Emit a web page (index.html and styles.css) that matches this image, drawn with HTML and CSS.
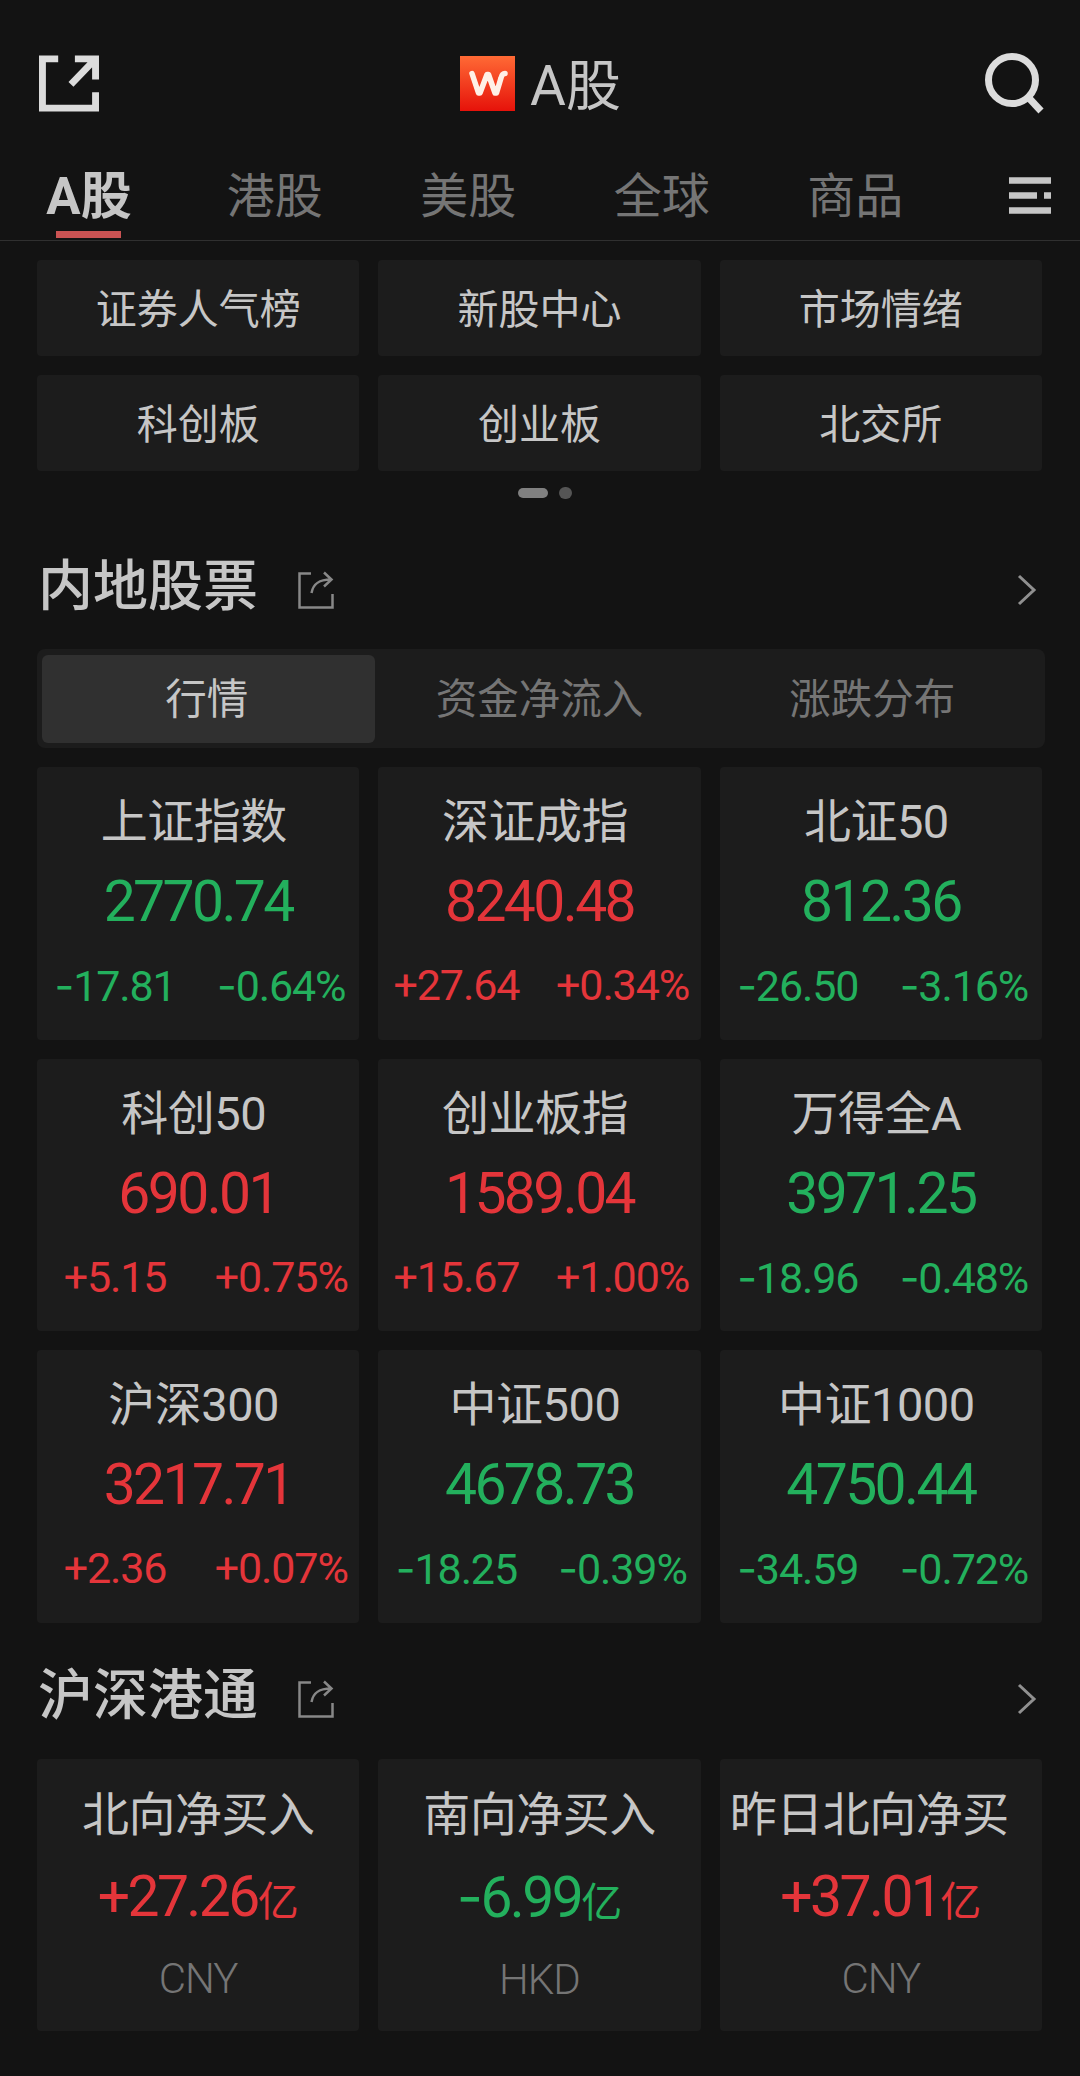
FILE: index.html
```html
<!DOCTYPE html>
<html lang="zh-CN">
<head>
  <meta charset="UTF-8" />
  <meta name="viewport" content="width=device-width, initial-scale=1.0" />
  <title>A股</title>
  <link rel="stylesheet" href="styles.css">
</head>
<body>
  <svg width="0" height="0" class="defs">
    <symbol id="share" viewBox="0 0 36 38">
      <path d="M13 2.5H1.5V36.5H34.5V23" />
      <path d="M13.5 22C15 13.5 20 8.5 33 8.5M26 1.5L33.5 8.5L26 15.5" />
    </symbol>
    <symbol id="chevron" viewBox="0 0 20 32">
      <path d="M2 2L17 16L2 30" />
    </symbol>
  </svg>

  <header class="topbar">
    <svg class="icon-open" viewBox="0 0 62 60">
      <path d="M20 5H4V55H58V39" />
      <path d="M37 5H58V26M57 6L33 31" />
    </svg>
    <div class="title">
      <svg class="logo" viewBox="0 0 55 55">
        <defs>
          <linearGradient id="logoBg" x1="0" y1="0" x2="0" y2="1">
            <stop offset="0" stop-color="#ff6a35" />
            <stop offset="1" stop-color="#e6120a" />
          </linearGradient>
        </defs>
        <rect width="55" height="55" fill="url(#logoBg)" />
        <path d="M12 17.500L18.500 37H20L27 18.500H28.500L35 37H36.500L41 22Q42 17.500 45 17.500" />
      </svg>
      <h1>A股</h1>
    </div>
    <svg class="icon-search" viewBox="0 0 62 62">
      <circle cx="28" cy="28" r="23.500" />
      <path d="M44 45L57 59" />
    </svg>
  </header>

  <nav class="tabs">
    <a class="active">A股</a>
    <a>港股</a>
    <a>美股</a>
    <a>全球</a>
    <a>商品</a>
    <svg class="icon-menu" viewBox="0 0 42 37">
      <path d="M0 3.500H42M0 18.500H28M35 18.500H42M0 33.500H42" />
    </svg>
  </nav>

  <main>
    <div class="grid shortcuts">
      <div class="card">证券人气榜</div>
      <div class="card">新股中心</div>
      <div class="card">市场情绪</div>
      <div class="card">科创板</div>
      <div class="card">创业板</div>
      <div class="card">北交所</div>
    </div>
    <div class="pager"><span class="on"></span><span></span></div>

    <div class="section-head">
      <h2>内地股票</h2>
      <svg class="share"><use href="#share" /></svg>
      <svg class="chevron"><use href="#chevron" /></svg>
    </div>
    <div class="segment">
      <div class="active">行情</div>
      <div>资金净流入</div>
      <div>涨跌分布</div>
    </div>

    <div class="grid quotes">
      <div class="card down">
        <h3>上证指数</h3>
        <p class="value">2770.74</p>
        <p class="change"><span><i>-</i>17.81</span><span><i>-</i>0.64%</span></p>
      </div>
      <div class="card up">
        <h3>深证成指</h3>
        <p class="value">8240.48</p>
        <p class="change"><span>+27.64</span><span>+0.34%</span></p>
      </div>
      <div class="card down">
        <h3>北证50</h3>
        <p class="value">812.36</p>
        <p class="change"><span><i>-</i>26.50</span><span><i>-</i>3.16%</span></p>
      </div>
      <div class="card up">
        <h3>科创50</h3>
        <p class="value">690.01</p>
        <p class="change"><span>+5.15</span><span>+0.75%</span></p>
      </div>
      <div class="card up">
        <h3>创业板指</h3>
        <p class="value">1589.04</p>
        <p class="change"><span>+15.67</span><span>+1.00%</span></p>
      </div>
      <div class="card down">
        <h3>万得全A</h3>
        <p class="value">3971.25</p>
        <p class="change"><span><i>-</i>18.96</span><span><i>-</i>0.48%</span></p>
      </div>
      <div class="card up">
        <h3>沪深300</h3>
        <p class="value">3217.71</p>
        <p class="change"><span>+2.36</span><span>+0.07%</span></p>
      </div>
      <div class="card down">
        <h3>中证500</h3>
        <p class="value">4678.73</p>
        <p class="change"><span><i>-</i>18.25</span><span><i>-</i>0.39%</span></p>
      </div>
      <div class="card down">
        <h3>中证1000</h3>
        <p class="value">4750.44</p>
        <p class="change"><span><i>-</i>34.59</span><span><i>-</i>0.72%</span></p>
      </div>
    </div>

    <div class="section-head connect-head">
      <h2>沪深港通</h2>
      <svg class="share"><use href="#share" /></svg>
      <svg class="chevron"><use href="#chevron" /></svg>
    </div>
    <div class="grid connect">
      <div class="card up">
        <h3>北向净买入</h3>
        <p class="value">+27.26<small>亿</small></p>
        <p class="currency">CNY</p>
      </div>
      <div class="card down">
        <h3>南向净买入</h3>
        <p class="value"><i>-</i>6.99<small>亿</small></p>
        <p class="currency">HKD</p>
      </div>
      <div class="card up">
        <h3 class="long">昨日北向净买</h3>
        <p class="value">+37.01<small>亿</small></p>
        <p class="currency">CNY</p>
      </div>
    </div>
  </main>
</body>
</html>
```
FILE: styles.css
```css
* {
  margin: 0;
  padding: 0;
  box-sizing: border-box;
}
body {
  background: #131313;
  color: #c6c6c6;
  font-family: Roboto, "Noto Sans CJK SC", sans-serif;
  height: 2076px;
  overflow: hidden;
}
svg {
  fill: none;
  flex: none;
}
.defs {
  display: block;
}

/* top bar */
.topbar {
  height: 166px;
  padding: 0 34px 0 38px;
  display: flex;
  align-items: center;
  justify-content: space-between;
}
.icon-open {
  width: 62px;
  height: 60px;
  padding-top: 1px;
  stroke: #dcdcdc;
  stroke-width: 7;
}
.title {
  display: flex;
  align-items: center;
  gap: 15px;
  margin-right: 3px;
}
.logo {
  width: 55px;
  height: 55px;
}
.logo path {
  stroke: #fff0e6;
  stroke-width: 5.5;
  stroke-linejoin: round;
  stroke-linecap: round;
}
h1 {
  padding-top: 5px;
  font-size: 55px;
  line-height: 60px;
  font-weight: 400;
}
.icon-search {
  width: 62px;
  height: 62px;
  stroke: #dcdcdc;
  stroke-width: 7;
}

/* market tabs */
.tabs {
  height: 75px;
  padding: 0 29px 0 0;
  display: flex;
  align-items: center;
  border-bottom: 1px solid #303030;
}
.tabs a {
  width: 193.5px;
  height: 74px;
  line-height: 62px;
  font-size: 48px;
  text-align: center;
  color: #757575;
}
.tabs a.active {
  width: 178px;
  position: relative;
  font-size: 51px;
  font-weight: 700;
  color: #c6c6c6;
}
.tabs a.active::after {
  content: "";
  position: absolute;
  left: 56px;
  bottom: 2px;
  width: 65px;
  height: 7px;
  background: #cb5353;
}
.icon-menu {
  width: 42px;
  height: 37px;
  margin: 0 0 15px auto;
  stroke: #c6c6c6;
  stroke-width: 6.5;
}

main {
  padding: 19px 38px 0 37px;
}
.grid {
  display: grid;
  grid-template-columns: repeat(3, 1fr);
  gap: 19px;
}
.card {
  background: #1c1c1c;
  border-radius: 4px;
  text-align: center;
}

.shortcuts {
  grid-auto-rows: 96px;
}
.shortcuts .card {
  padding-top: 3px;
  font-size: 41px;
  line-height: 95px;
}
.pager {
  height: 12px;
  margin-top: 16px;
  display: flex;
  align-items: center;
  justify-content: center;
  gap: 11px;
  padding-left: 10px;
}
.pager span {
  width: 13px;
  height: 12px;
  border-radius: 6px;
  background: #555;
}
.pager .on {
  width: 30px;
  height: 10px;
  background: #808080;
}

/* section title row */
.section-head {
  height: 150px;
  padding: 24px 5px 0 1px;
  display: flex;
  align-items: center;
}
h2 {
  font-size: 55px;
  line-height: 76px;
  font-weight: 500;
}
.share {
  width: 36px;
  height: 38px;
  margin: 8px 0 0 40px;
  stroke: #888;
  stroke-width: 2.5;
}
.chevron {
  width: 20px;
  height: 32px;
  margin: 8px 0 0 auto;
  stroke: #909090;
  stroke-width: 3;
}

.segment {
  height: 99px;
  margin-right: -3px;
  padding: 6px 5px 5px;
  display: flex;
  border-radius: 8px;
  background: #1c1c1c;
}
.segment div {
  flex: 1;
  padding: 2px 3px 0 0;
  border-radius: 6px;
  font-size: 41.5px;
  line-height: 86px;
  text-align: center;
  color: #757575;
}
.segment .active {
  background: #303030;
  color: #c6c6c6;
}

/* quote cards */
.quotes {
  margin-top: 19px;
}
.quotes .card, .connect .card {
  height: 272.5px;
  overflow: hidden;
}
h3 {
  margin-top: 21px;
  padding-right: 9px;
  font-size: 47px;
  line-height: 68px;
  font-weight: 400;
  letter-spacing: -0.5px;
  white-space: nowrap;
}
.value {
  margin-top: 12px;
  font-size: 57px;
  line-height: 68px;
  letter-spacing: -2.6px;
}
.value small {
  font-size: 41px;
  letter-spacing: 0;
}
.change {
  margin-top: 22px;
  display: flex;
  gap: 10px;
  font-size: 43px;
  line-height: 54px;
  letter-spacing: -1.1px;
}
.change span {
  flex: 1;
}
.up p {
  color: #e4353a;
}
.down p {
  color: #23b05d;
}
i {
  font-family: Inter, sans-serif;
  font-style: normal;
}

.connect-head {
  height: 136px;
  padding-top: 8px;
}
.connect h3 {
  padding-right: 0;
  margin-top: 22px;
}
.connect h3.long {
  padding-left: 10px;
  text-align: left;
}
.connect .value {
  margin-top: 14px;
}
.connect .currency {
  margin-top: 16px;
  font-size: 42px;
  line-height: 54px;
  font-weight: 300;
  letter-spacing: -1px;
  color: #757575;
}
```
